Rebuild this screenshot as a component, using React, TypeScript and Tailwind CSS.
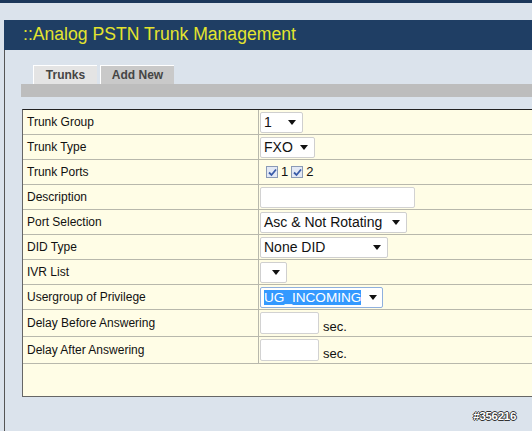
import React from 'react';

const font = { fontFamily: '"Liberation Sans", Arial, sans-serif' };

const Arrow: React.FC = () => (
  <svg width="8" height="5" viewBox="0 0 8 5" className="shrink-0">
    <path d="M0 0 H8 L4 5 Z" fill="#111" />
  </svg>
);

const Select: React.FC<{ value: string; width: string; selected?: boolean }> = ({ value, width, selected }) => (
  <div
    className={`flex items-center justify-between h-[21px] bg-white rounded-[2px] border pl-[3px] text-[14px] text-[#111] ${width} ${
      selected ? 'border-[#8fb0de] pr-[5px]' : 'border-[#cfcfcf] pr-[6px]'
    }`}
  >
    {selected ? (
      <span className="bg-[#3399ff] text-white leading-[15px] text-[13.6px]">{value}</span>
    ) : (
      <span className="leading-[15px]">{value}</span>
    )}
    <Arrow />
  </div>
);

const TextBox: React.FC<{ width: string; height?: string }> = ({ width, height }) => (
  <div className={`bg-white border border-[#d2d2d2] rounded-[2px] ${width} ${height ?? 'h-[22px]'}`} />
);

const Check: React.FC = () => (
  <span className="inline-flex items-center justify-center w-[12px] h-[12px] border border-[#8a9ab6] bg-[#e3e9f5]">
    <svg width="9" height="9" viewBox="0 0 9 9">
      <path d="M1 4.5 L3.5 7 L8 1.5" stroke="#3a5ca8" strokeWidth="1.8" fill="none" />
    </svg>
  </span>
);

type Row = { label: string; tall?: boolean; control: React.ReactNode };

const SecField: React.FC = () => (
  <div className="flex items-end gap-[4px]">
    <TextBox width="w-[59px]" />
    <span className="text-[13px] text-[#111] leading-[15px]">sec.</span>
  </div>
);

const rows: Row[] = [
  { label: 'Trunk Group', control: <Select value="1" width="w-[43px]" /> },
  { label: 'Trunk Type', control: <Select value="FXO" width="w-[55px]" /> },
  {
    label: 'Trunk Ports',
    control: (
      <div className="flex items-center gap-[3px] pl-[6px] text-[13px] text-[#111]">
        <Check />
        <span>1</span>
        <Check />
        <span>2</span>
      </div>
    ),
  },
  { label: 'Description', control: <TextBox width="w-[155px]" height="h-[21px]" /> },
  { label: 'Port Selection', control: <Select value="Asc & Not Rotating" width="w-[147px]" /> },
  { label: 'DID Type', control: <Select value="None DID" width="w-[128px]" /> },
  { label: 'IVR List', control: <Select value="" width="w-[27px]" /> },
  { label: 'Usergroup of Privilege', control: <Select value="UG_INCOMING" width="w-[123px]" selected /> },
  { label: 'Delay Before Answering', tall: true, control: <SecField /> },
  { label: 'Delay After Answering', tall: true, control: <SecField /> },
];

const App: React.FC = () => {
  return (
    <div className="relative w-[532px] h-[431px] overflow-hidden bg-[#dbe3ec]" style={font}>
      <div className="h-[3px] bg-[#1b375a]" />
      <div className="mt-[17px] ml-[4px] w-[560px]">
        <div className="h-[30px] bg-[#1f3e64] flex items-center pl-[19px]">
          <span className="text-[17.6px] text-[#e4e42e] leading-none">::Analog PSTN Trunk Management</span>
        </div>
        <div className="border-l border-[#555] h-[381px] pt-[15px] pl-[16px]">
          <div className="flex ml-[12px] gap-[3px] h-[19px]">
            <div className="w-[64px] bg-[#e4e4e4] border-t border-l border-white flex items-center justify-center text-[12px] font-bold text-[#454545]">
              Trunks
            </div>
            <div className="w-[74px] bg-[#c9c9c9] border-t border-l border-white flex items-center justify-center text-[12px] font-bold text-[#454545]">
              Add New
            </div>
          </div>
          <div className="h-[13px] bg-[#bdbdbd]" />
          <div className="mt-[12px] ml-[1px] w-[530px] h-[288px] bg-[#fffde6] border border-[#666] border-t-[#222]">
            {rows.map((r) => (
              <div
                key={r.label}
                className={`grid grid-cols-[236px_1fr] border-b border-[#b8b8ac] ${r.tall ? 'h-[27px]' : 'h-[25px]'}`}
              >
                <div className="flex items-center pl-[4px] border-r border-[#b8b8ac] text-[12px] text-[#111]">
                  {r.label}
                </div>
                <div className="flex items-center pl-[1px]">{r.control}</div>
              </div>
            ))}
          </div>
        </div>
      </div>
      <div
        className="absolute right-[16px] bottom-[6px] text-[11.5px] font-bold text-white tracking-[-0.3px]"
        style={{ textShadow: '1px 0 #333, -1px 0 #333, 0 1px #333, 0 -1px #333' }}
      >
        #356216
      </div>
    </div>
  );
};

export default App;
